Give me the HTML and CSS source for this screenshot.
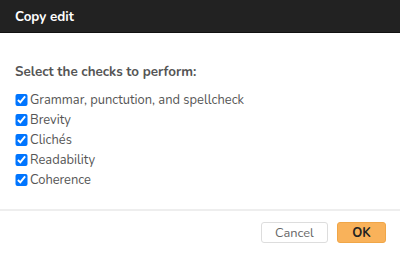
FILE: index.html
```html
<!DOCTYPE html>
<html>
<head>
<meta charset="utf-8">
<link rel="stylesheet" href="styles.css">
</head>
<body>
<div class="dialog">
  <div class="header"><h1 class="title">Copy edit</h1></div>
  <div class="body">
    <h2 class="heading">Select the checks to perform:</h2>
    <ul class="checks">
      <li><label><input type="checkbox" checked><span>Grammar, punctution, and spellcheck</span></label></li>
      <li><label><input type="checkbox" checked><span>Brevity</span></label></li>
      <li><label><input type="checkbox" checked><span>Clichés</span></label></li>
      <li><label><input type="checkbox" checked><span>Readability</span></label></li>
      <li><label><input type="checkbox" checked><span>Coherence</span></label></li>
    </ul>
  </div>
  <div class="footer">
    <button class="btn btn-cancel">Cancel</button>
    <button class="btn btn-ok">OK</button>
  </div>
</div>
</body>
</html>
```
FILE: styles.css
```css
html, body {
  margin: 0;
  padding: 0;
  background: #fff;
}
body {
  font-family: "Nunito", "Lato", "Open Sans", sans-serif;
  color: #555;
}
.dialog {
  width: 400px;
  height: 254px;
  display: flex;
  flex-direction: column;
}
.header {
  background: #222;
  height: 32px;
  border-bottom: 1px solid #111;
  display: flex;
  align-items: center;
  padding: 0 15px;
  flex: none;
}
.title {
  margin: 0;
  color: #fff;
  font-size: 13.4px;
  font-weight: 700;
}
.body {
  flex: 1;
  padding: 31px 15px 0;
}
.heading {
  margin: 0 0 10px;
  font-size: 13.4px;
  line-height: 16px;
  font-weight: 700;
  color: #555;
}
.checks {
  list-style: none;
  margin: 0;
  padding: 0;
}
.checks li {
  height: 20px;
  display: flex;
  align-items: center;
  font-size: 12.9px;
  color: #555;
}
.checks label {
  display: flex;
  align-items: center;
  gap: 2.5px;
}
.checks input {
  margin: 0;
  width: 12.5px;
  height: 12.5px;
}
.footer {
  flex: none;
  border-top: 2px solid #eee;
  height: 43px;
  display: flex;
  justify-content: flex-end;
  align-items: center;
  gap: 9px;
  padding: 0 14px 0 0;
}
.btn {
  font-family: inherit;
  font-size: 12.8px;
  height: 21px;
  border-radius: 3px;
  padding: 0;
  cursor: pointer;
}
.btn-cancel {
  width: 67px;
  background: #fff;
  border: 1px solid #ddd;
  color: #666;
}
.btn-ok {
  width: 49px;
  background: #f9b25a;
  border: 1px solid #f0a648;
  color: #222;
  font-weight: 700;
}
```
